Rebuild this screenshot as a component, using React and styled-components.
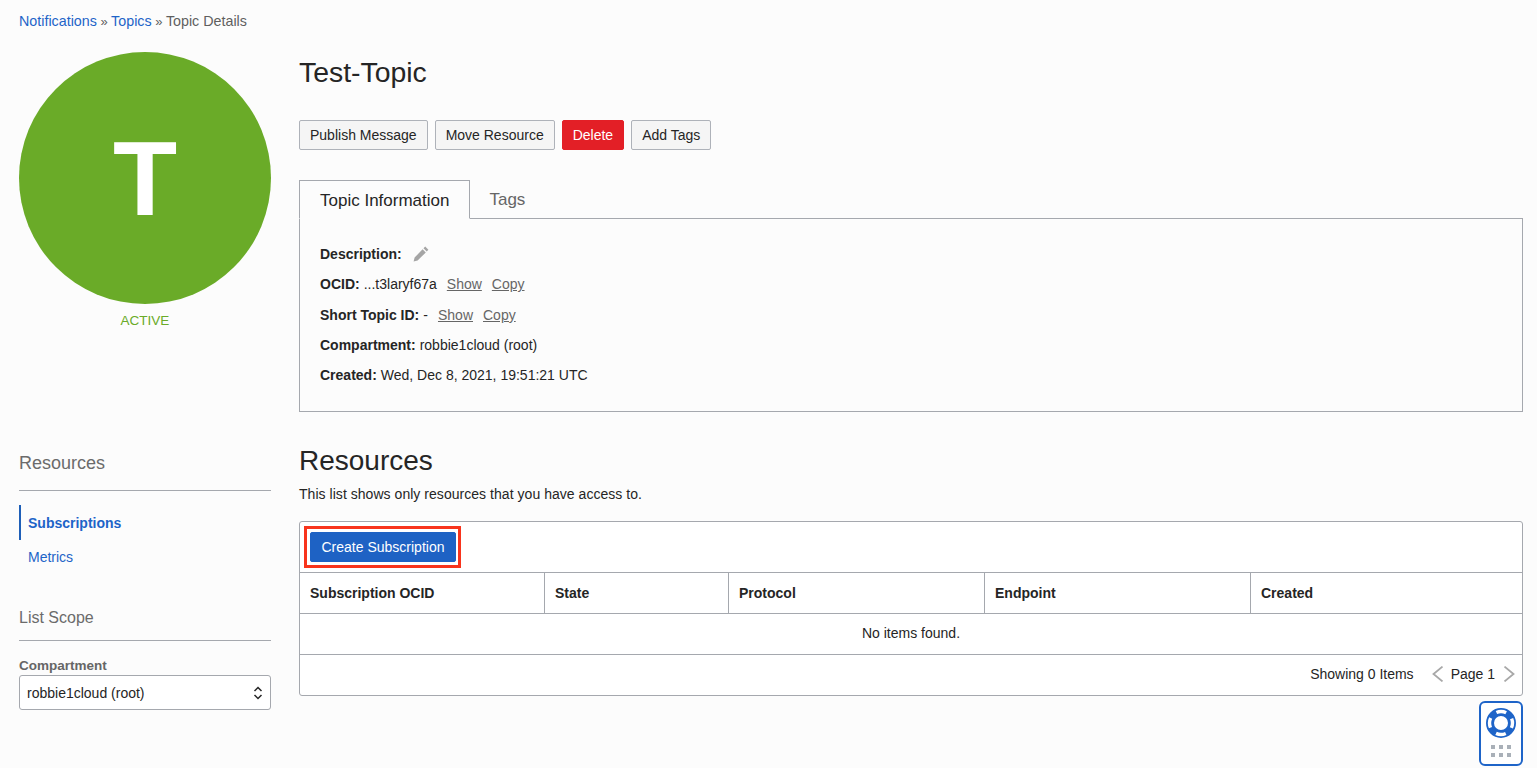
import React from 'react'
import styled, { createGlobalStyle } from 'styled-components'

const GlobalStyle = createGlobalStyle`
    html, body {
        margin: 0;
        padding: 0;
        background: #fcfcfc;
    }
    body {
        font-family: "Liberation Sans", Arial, sans-serif;
        font-size: 14px;
        color: #252525;
        overflow: hidden;
    }
`

const Page = styled.div`
    height: 768px;
    box-sizing: border-box;
    padding: 13px 14px 0 19px;
`

const Breadcrumbs = styled.div`
    height: 16px;
    line-height: 16px;
    font-size: 14.3px;
    color: #5f5f5f;
`

const Crumb = styled.a`
    color: #1e64c8;
`

const Sep = styled.span`
    margin: 0 3.5px;
    font-size: 13px;
`

const Row = styled.div`
    display: grid;
    grid-template-columns: 252px 1fr;
    column-gap: 28px;
`

const TopRow = styled(Row)`
    margin-top: 7px;
    height: 375px;
`

const BottomRow = styled(Row)`
    margin-top: 32px;
`

const Badge = styled.div`
    margin-top: 16px;
    width: 252px;
    height: 252px;
    border-radius: 50%;
    background: #6aab28;
    color: #fff;
    display: flex;
    align-items: center;
    justify-content: center;
    font-size: 105px;
    font-weight: 700;
    line-height: 1;
`

const StateLabel = styled.div`
    margin-top: 9px;
    text-align: center;
    font-size: 13.5px;
    line-height: 16px;
    color: #6aab28;
`

const Title = styled.h1`
    margin: 16px 0 0;
    font-size: 28.4px;
    font-weight: 400;
    line-height: 40px;
    color: #252525;
`

const Actions = styled.div`
    display: flex;
    gap: 7px;
    margin-top: 28px;
`

const Button = styled.button`
    height: 30px;
    box-sizing: border-box;
    padding: 0 ${p => (p.$kind === 'primary' ? 10.5 : 10)}px;
    font-family: inherit;
    font-size: 14px;
    border-radius: 2px;
    border: 1px solid ${p => (p.$kind === 'danger' ? '#e31f26' : p.$kind === 'primary' ? '#1e62c4' : '#aeb2b9')};
    background: ${p => (p.$kind === 'danger' ? '#e31f26' : p.$kind === 'primary' ? '#1e62c4' : '#f5f5f5')};
    color: ${p => (p.$kind ? '#fff' : '#252525')};
`

const Tabs = styled.div`
    display: flex;
    margin-top: 30px;
    height: 39px;
    box-sizing: border-box;
    border-bottom: 1px solid #a5a8ae;
`

const Tab = styled.div`
    box-sizing: border-box;
    height: ${p => (p.$active ? '39px' : '38px')};
    padding: 0 20px;
    font-size: 17px;
    line-height: 40px;
    color: ${p => (p.$active ? '#252525' : '#666')};
    background: ${p => (p.$active ? '#fcfcfc' : 'transparent')};
    border: ${p => (p.$active ? '1px solid #a5a8ae' : 'none')};
    border-bottom: ${p => (p.$active ? '1px solid #fcfcfc' : 'none')};
    margin-left: ${p => (p.$active ? 0 : -1)}px;
`

const InfoPanel = styled.div`
    box-sizing: border-box;
    height: 193px;
    padding: 27px 20px 0;
    border: 1px solid #a5a8ae;
    border-top: none;
    display: flex;
    flex-direction: column;
    gap: 14px;
`

const InfoLine = styled.div`
    display: flex;
    align-items: center;
    height: 16.3px;
    line-height: 16px;
    white-space: pre;
`

const Key = styled.b`
    font-weight: 700;
    margin-right: 4px;
`

const LinkAction = styled.a`
    margin-left: 10px;
    color: #666;
    text-decoration: underline;
`

const EditIcon = styled.svg`
    width: 16px;
    height: 16px;
    margin-left: 7px;
    fill: #a5a5a5;
`

const SideColumn = styled.div`
    padding-top: 8px;
`

const SideHeading = styled.h3`
    margin: 0;
    font-size: ${p => p.$size || 18}px;
    font-weight: 400;
    line-height: 24px;
    color: #6b6b6b;
    padding-bottom: ${p => p.$pad || 15}px;
    border-bottom: 1px solid #a5a8ae;
`

const SideMenu = styled.div`
    margin-top: 14px;
    margin-bottom: 31px;
`

const SideLink = styled.a`
    display: block;
    box-sizing: border-box;
    height: 35px;
    line-height: ${p => (p.$active ? 36 : 35)}px;
    padding-left: ${p => (p.$active ? '7px' : '9px')};
    font-weight: ${p => (p.$active ? 700 : 400)};
    color: #1e64c8;
    border-left: ${p => (p.$active ? '2px solid #1e5fb8' : 'none')};
`

const FieldLabel = styled.div`
    margin-top: 17px;
    font-weight: 700;
    font-size: 13.5px;
    line-height: 16px;
    color: #666;
`

const SelectBox = styled.div`
    margin-top: 1px;
    box-sizing: border-box;
    height: 35px;
    padding: 0 7px;
    display: flex;
    align-items: center;
    justify-content: space-between;
    border: 1px solid #a5a8ae;
    border-radius: 3px;
    background: #fff;
`

const SectionTitle = styled.h2`
    margin: 0;
    font-size: 28px;
    font-weight: 400;
    line-height: 36px;
    color: #252525;
`

const SectionNote = styled.p`
    margin: 7px 0 0;
    line-height: 16px;
    letter-spacing: 0.04px;
`

const TablePanel = styled.div`
    margin-top: 19px;
    height: 175px;
    box-sizing: border-box;
    border: 1px solid #a5a8ae;
    border-radius: 3px;
    background: #fff;
`

const Toolbar = styled.div`
    height: 51px;
    box-sizing: border-box;
    display: flex;
    align-items: center;
    padding-left: 10px;
    border-bottom: 1px solid #a5a8ae;
`

const Highlight = styled.div`
    position: relative;
    display: flex;

    &::after {
        content: '';
        position: absolute;
        inset: -6px -5px -6px -6px;
        border: 3px solid #f8341c;
        pointer-events: none;
    }
`

const HeadRow = styled.div`
    display: grid;
    grid-template-columns: 244px 184px 256px 266px 1fr;
    height: 41px;
    box-sizing: border-box;
    border-bottom: 1px solid #a5a8ae;
`

const HeadCell = styled.div`
    display: flex;
    align-items: center;
    padding-left: 10px;
    font-weight: 700;
    border-left: ${p => (p.$first ? 'none' : '1px solid #a5a8ae')};
`

const EmptyRow = styled.div`
    height: 41px;
    box-sizing: border-box;
    line-height: 39px;
    text-align: center;
    border-bottom: 1px solid #a5a8ae;
`

const Pager = styled.div`
    height: 38px;
    display: flex;
    align-items: center;
    justify-content: flex-end;
    padding-right: 7px;
`

const PageText = styled.span`
    margin: 0 8px 0 7px;
`

const Chevron = styled.svg`
    width: 12px;
    height: 16px;
    margin-left: ${p => p.$gap || 0}px;
    fill: none;
    stroke: #a8a8a8;
    stroke-width: 1.8;
`

const HelpWidget = styled.div`
    position: fixed;
    left: 1479px;
    top: 701px;
    width: 44px;
    height: 65px;
    box-sizing: border-box;
    border: 2px solid #1e64c8;
    border-radius: 6px;
    background: #fff;
    display: flex;
    flex-direction: column;
    align-items: center;
    padding-top: 5px;
    gap: 7px;
`

const Dots = styled.div`
    display: grid;
    grid-template-columns: repeat(3, 4px);
    gap: 4px;
    span {
        width: 4px;
        height: 4px;
        background: #a9b0b8;
    }
`

const LifeRing = () => (
    <svg width="30" height="30" viewBox="0 0 30 30">
        <circle cx="15" cy="15" r="11" fill="none" stroke="#1e64c8" strokeWidth="8" />
        <circle cx="15" cy="15" r="11.5" fill="none" stroke="#fff" strokeWidth="3.4" strokeDasharray="10 8.06" strokeDashoffset="5" />
    </svg>
)

const columns = ['Subscription OCID', 'State', 'Protocol', 'Endpoint', 'Created']

export default function App() {
    return (
        <Page>
            <GlobalStyle />
            <Breadcrumbs>
                <Crumb>Notifications</Crumb><Sep>»</Sep><Crumb>Topics</Crumb><Sep>»</Sep>Topic Details
            </Breadcrumbs>

            <TopRow>
                <div>
                    <Badge>T</Badge>
                    <StateLabel>ACTIVE</StateLabel>
                </div>
                <div>
                    <Title>Test-Topic</Title>
                    <Actions>
                        <Button>Publish Message</Button>
                        <Button>Move Resource</Button>
                        <Button $kind="danger">Delete</Button>
                        <Button>Add Tags</Button>
                    </Actions>
                    <Tabs>
                        <Tab $active>Topic Information</Tab>
                        <Tab>Tags</Tab>
                    </Tabs>
                    <InfoPanel>
                        <InfoLine>
                            <Key>Description:</Key>
                            <EditIcon viewBox="0 0 16 16">
                                <path d="M12.2.6l3.2 3.2-1.7 1.7-3.2-3.2zM9.6 3.2l3.2 3.2-8.2 8.2-4 1 1-4z" />
                            </EditIcon>
                        </InfoLine>
                        <InfoLine><Key>OCID:</Key>...t3laryf67a<LinkAction>Show</LinkAction><LinkAction>Copy</LinkAction></InfoLine>
                        <InfoLine><Key>Short Topic ID:</Key>-<LinkAction>Show</LinkAction><LinkAction>Copy</LinkAction></InfoLine>
                        <InfoLine><Key>Compartment:</Key>robbie1cloud (root)</InfoLine>
                        <InfoLine><Key>Created:</Key>Wed, Dec 8, 2021, 19:51:21 UTC</InfoLine>
                    </InfoPanel>
                </div>
            </TopRow>

            <BottomRow>
                <SideColumn>
                    <SideHeading>Resources</SideHeading>
                    <SideMenu>
                        <SideLink $active>Subscriptions</SideLink>
                        <SideLink>Metrics</SideLink>
                    </SideMenu>
                    <SideHeading $size={16} $pad={10}>List Scope</SideHeading>
                    <FieldLabel>Compartment</FieldLabel>
                    <SelectBox>
                        robbie1cloud (root)
                        <svg width="10" height="16" viewBox="0 0 10 16" fill="none" stroke="#252525" strokeWidth="1.5">
                            <path d="M1.5 6L5 2.5 8.5 6M1.5 10L5 13.5 8.5 10" />
                        </svg>
                    </SelectBox>
                </SideColumn>
                <div>
                    <SectionTitle>Resources</SectionTitle>
                    <SectionNote>This list shows only resources that you have access to.</SectionNote>
                    <TablePanel>
                        <Toolbar>
                            <Highlight>
                                <Button $kind="primary">Create Subscription</Button>
                            </Highlight>
                        </Toolbar>
                        <HeadRow>
                            {columns.map((name, index) => (
                                <HeadCell key={name} $first={index === 0}>{name}</HeadCell>
                            ))}
                        </HeadRow>
                        <EmptyRow>No items found.</EmptyRow>
                        <Pager>
                            Showing 0 Items
                            <Chevron $gap={18} viewBox="0 0 12 16"><path d="M10.5 .6L1.5 8l9 7.4" /></Chevron>
                            <PageText>Page 1</PageText>
                            <Chevron viewBox="0 0 12 16"><path d="M1.5 .6l9 7.4-9 7.4" /></Chevron>
                        </Pager>
                    </TablePanel>
                </div>
            </BottomRow>

            <HelpWidget>
                <LifeRing />
                <Dots>{[0, 1, 2, 3, 4, 5].map(i => <span key={i} />)}</Dots>
            </HelpWidget>
        </Page>
    )
}
